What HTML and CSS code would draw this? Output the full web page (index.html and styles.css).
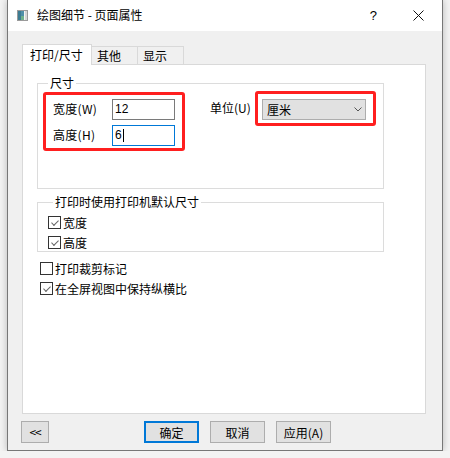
FILE: index.html
```html
<!DOCTYPE html>
<html lang="zh-CN">
<head>
    <meta charset="UTF-8">
    <title>绘图细节 - 页面属性</title>
    <link rel="stylesheet" href="styles.css">
</head>
<body>
    <div class="window">
        <div class="titlebar">
            <svg class="app-icon" width="11" height="11" viewBox="0 0 11 11">
                <rect x="0.5" y="0.5" width="10" height="10" fill="#f4f4f4" stroke="#9a9a9a"/>
                <rect x="1" y="1" width="6" height="9" fill="#4f8fa8"/>
                <rect x="1" y="1" width="3" height="9" fill="#3d7c92"/>
                <rect x="4" y="6" width="3" height="4" fill="#6fb08a"/>
                <rect x="8" y="1" width="2" height="9" fill="#d6d6d6"/>
            </svg>
            <span class="title">绘图细节 - 页面属性</span>
            <span class="tb-help">?</span>
            <svg class="tb-close" width="11" height="11" viewBox="0 0 11 11">
                <path d="M0.5 0.5 L10.5 10.5 M10.5 0.5 L0.5 10.5" stroke="#111" stroke-width="1"/>
            </svg>
        </div>

        <div class="client">
            <div class="tabs">
                <div class="tab active">打印/尺寸</div>
                <div class="tab">其他</div>
                <div class="tab">显示</div>
            </div>

            <div class="panel">
                <fieldset class="group size-group">
                    <legend>尺寸</legend>
                    <div class="size-row">
                        <div class="mark size-fields">
                            <div class="field">
                                <label>宽度(W)</label>
                                <div class="edit">12</div>
                            </div>
                            <div class="field">
                                <label>高度(H)</label>
                                <div class="edit focused">6<span class="caret"></span></div>
                            </div>
                        </div>
                        <label class="unit-label">单位(U)</label>
                        <div class="mark unit-box">
                            <div class="combo">
                                <span>厘米</span>
                                <svg width="8" height="5" viewBox="0 0 8 5">
                                    <path d="M0.5 0.5 L4 4 L7.5 0.5" fill="none" stroke="#555" stroke-width="1"/>
                                </svg>
                            </div>
                        </div>
                    </div>
                </fieldset>

                <fieldset class="group printer-group">
                    <legend>打印时使用打印机默认尺寸</legend>
                    <div class="check"><span class="box checked"></span>宽度</div>
                    <div class="check"><span class="box checked"></span>高度</div>
                </fieldset>

                <div class="loose-checks">
                    <div class="check"><span class="box"></span>打印裁剪标记</div>
                    <div class="check"><span class="box checked"></span>在全屏视图中保持纵横比</div>
                </div>
            </div>

            <div class="buttons">
                <button class="btn btn-back">&lt;&lt;</button>
                <button class="btn btn-default">确定</button>
                <button class="btn">取消</button>
                <button class="btn">应用(A)</button>
            </div>
        </div>
    </div>
</body>
</html>
```

FILE: styles.css
```css
body {
    margin: 0;
    padding: 0 0 0 7px;
    background-color: #f3f3f3;
    font-family: "Noto Sans CJK SC", "Noto Sans", sans-serif;
    font-size: 12px;
    color: #000;
}
.window {
    width: 436px;
    height: 451px;
    box-sizing: border-box;
    border: 1px solid #777;
    border-top: none;
    background-color: #f0f0f0;
    box-shadow: 0 0 7px rgba(0, 0, 0, 0.25);
    display: flex;
    flex-direction: column;
}
.titlebar {
    height: 31px;
    background-color: #fff;
    display: flex;
    align-items: center;
    padding-left: 9px;
    flex-shrink: 0;
}
.app-icon {
    margin-top: -1px;
}
.title {
    margin-left: 9px;
    line-height: 14px;
    margin-top: -1px;
}
.tb-help {
    margin-left: auto;
    font-family: "Liberation Sans", sans-serif;
    font-size: 13px;
    margin-top: -1px;
}
.tb-close {
    margin-left: 36px;
    margin-right: 18px;
    margin-top: -1px;
}
.client {
    flex: 1;
    padding: 13px 16px 0 14px;
    display: flex;
    flex-direction: column;
}
.tabs {
    display: flex;
    align-items: flex-end;
    height: 20px;
}
.tab {
    height: 18px;
    box-sizing: border-box;
    width: 47px;
    margin-left: -1px;
    padding-left: 5px;
    border: 1px solid #d9d9d9;
    border-bottom: none;
    line-height: 17px;
    background-color: #f0f0f0;
}
.tab.active {
    position: relative;
    z-index: 1;
    height: 21px;
    width: 70px;
    margin-left: 0;
    margin-bottom: -1px;
    padding-left: 7px;
    line-height: 19px;
    background-color: #fff;
}
.tab.active + .tab {
    margin-left: -1px;
}
.panel {
    height: 350px;
    box-sizing: border-box;
    background-color: #fff;
    border: 1px solid #d9d9d9;
    padding: 11px 0 0 14px;
}
.group {
    width: 347px;
    box-sizing: border-box;
    margin: 0;
    border: 1px solid #dcdcdc;
    min-width: 0;
}
.group legend {
    padding: 0 2px;
    margin-left: 5px;
    line-height: 14px;
}
.size-group {
    padding: 2px 5px 37px;
}
.size-row {
    display: flex;
    align-items: flex-start;
}
.mark {
    border: 3px solid #ff1f1f;
    border-radius: 3px;
}
.size-fields {
    width: 142px;
    box-sizing: border-box;
    padding: 4px 7px 3px 7px;
    display: flex;
    flex-direction: column;
    gap: 6px;
}
.field {
    display: flex;
    align-items: center;
    justify-content: space-between;
    height: 20px;
}
.field label {
    margin-top: -2px;
    letter-spacing: 0.3px;
}
.edit {
    width: 63px;
    height: 21px;
    box-sizing: border-box;
    border: 1px solid #7a7a7a;
    padding-left: 2px;
    line-height: 18px;
    font-family: "Liberation Sans", sans-serif;
    font-size: 12px;
    display: flex;
    align-items: center;
}
.edit.focused {
    border-color: #0078d7;
}
.caret {
    display: inline-block;
    width: 1px;
    height: 13px;
    background-color: #000;
    margin-left: 1px;
}
.unit-label {
    margin-left: 25px;
    margin-top: 7px;
    width: 45px;
}
.unit-box {
    width: 121px;
    box-sizing: border-box;
    padding: 5px 7px 3px 4px;
    margin-top: -1px;
}
.combo {
    height: 21px;
    box-sizing: border-box;
    background-color: #e1e1e1;
    border: 1px solid #adadad;
    display: flex;
    align-items: center;
    justify-content: space-between;
    padding: 0 3px 0 4px;
}
.printer-group {
    margin-top: 6px;
    padding: 5px 0 1px 10px;
}
.check {
    display: flex;
    align-items: center;
    height: 16px;
    margin-bottom: 4px;
}
.printer-group .check:last-child {
    margin-bottom: 0;
}
.box {
    width: 13px;
    height: 13px;
    box-sizing: border-box;
    border: 1px solid #333;
    background-color: #fff;
    margin-right: 2px;
    position: relative;
}
.box.checked::after {
    content: "";
    position: absolute;
    left: 2px;
    top: 1px;
    width: 6px;
    height: 3px;
    border-left: 1px solid #666;
    border-bottom: 1px solid #666;
    transform: translate(0.5px, 2px) rotate(-45deg);
}
.loose-checks {
    margin-top: 8px;
    padding-left: 3px;
}
.buttons {
    display: flex;
    margin-top: 7px;
    margin-left: -1px;
}
.btn {
    height: 22px;
    width: 55px;
    box-sizing: border-box;
    background-color: #e1e1e1;
    border: 1px solid #adadad;
    font-family: "Noto Sans CJK SC", "Noto Sans", sans-serif;
    font-size: 12px;
    padding: 0;
    margin-right: 11px;
    color: #000;
}
.btn-back {
    width: 28px;
    margin-right: 95px;
    font-family: "DejaVu Sans Mono", monospace;
    font-size: 11px;
    letter-spacing: -1px;
}
.btn-default {
    border: 2px solid #0078d7;
}
```
